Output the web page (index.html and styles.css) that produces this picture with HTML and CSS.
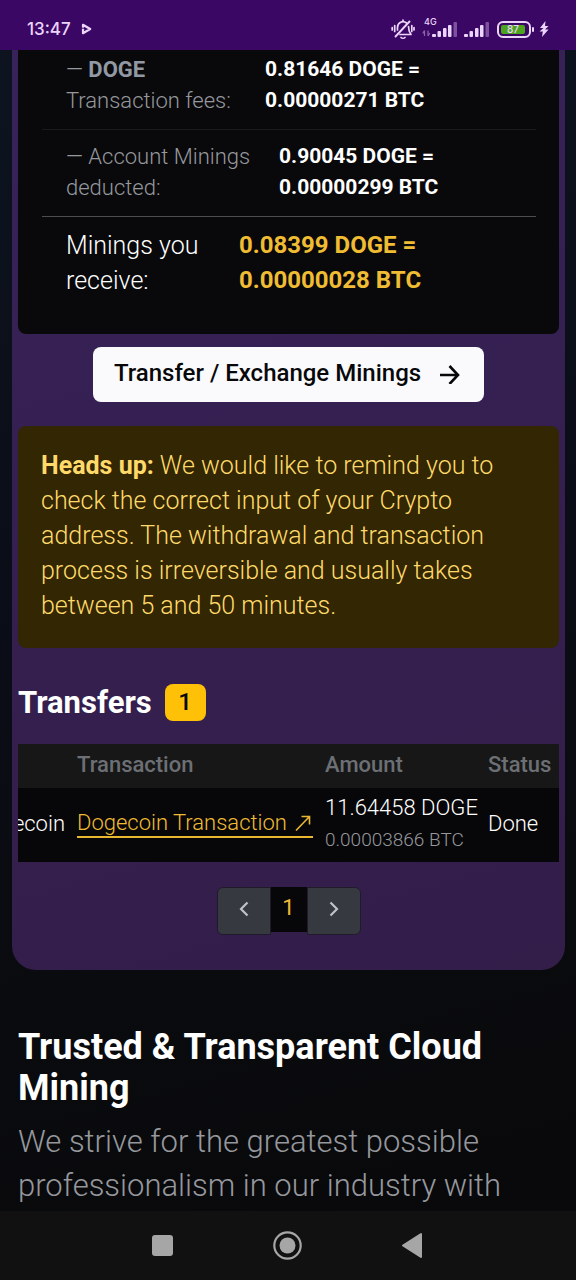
FILE: index.html
```html
<!DOCTYPE html>
<html lang="en">
<head>
<meta charset="utf-8">
<meta name="viewport" content="width=device-width, initial-scale=1">
<title>Cloud Mining</title>
<link rel="stylesheet" href="styles.css">
</head>
<body>
<header class="status-bar">
  <div class="status-left">
    <time class="clock">13:47</time>
    <svg class="play" viewBox="0 0 11 12" width="11" height="12" aria-hidden="true"><path d="M2 1.8L9.2 6 2 10.2z" fill="none" stroke="#ecd5fb" stroke-width="2.2" stroke-linejoin="round"/><path d="M0 5.2h4" stroke="#3b0764" stroke-width="1"/></svg>
  </div>
  <div class="status-right">
    <svg viewBox="0 0 24 22" width="24" height="22" aria-hidden="true" fill="none" stroke="#ecd5fb" stroke-width="1.7" stroke-linecap="round"><path d="M6.500 12V9.500a5.500 5.800 0 0 1 9-4.500M17.500 8.500c0 4 .5 5.500 2.500 8H9" stroke-linejoin="round"/><path d="M10 19.500c1 1 3 1 4 0M12 3V2M3.700 7.500v6M1.200 9.500v2.500M20.800 7.500v6M23 9.500v2.500"/><path d="M4.500 18.500L18.500 3.500" stroke-width="1.900"/></svg>
    <span class="network">
      <span class="network-type">4G</span>
      <svg viewBox="0 0 36 20" width="36" height="20" aria-hidden="true" fill="#ecd5fb"><path d="M2.500 11.500v5.500M.8 14.500l1.700-3M6 11.500v5.500M7.700 14l-1.700 3" stroke="#8d65aa" stroke-width="1.200" fill="none"/><rect x="10" y="15" width="4" height="3" rx="1"/><rect x="15.500" y="12" width="3.500" height="6" rx="1"/><rect x="21" y="9" width="3.500" height="9" rx="1"/><rect x="26" y="6" width="3.500" height="12" rx="1"/><rect x="31.500" y="3" width="3.500" height="15" rx="1" fill="#7d519f"/></svg>
    </span>
    <svg class="signal" viewBox="0 0 26 20" width="26" height="20" aria-hidden="true" fill="#ecd5fb"><rect x="0" y="15" width="4" height="3" rx="1"/><rect x="5.500" y="12" width="3.500" height="6" rx="1"/><rect x="11" y="9" width="3.500" height="9" rx="1"/><rect x="16" y="6" width="3.500" height="12" rx="1"/><rect x="21.500" y="3" width="3.500" height="15" rx="1" fill="#7d519f"/></svg>
    <span class="battery"><span class="battery-level">87</span></span>
    <svg class="bolt" viewBox="0 0 10 16" width="10" height="16" aria-hidden="true"><path d="M6.500 0L1 7h3.500L.5 10.500h3.300L3 16l6.500-7.500H6L9.500 5H6z" fill="#ecd5fb"/></svg>
  </div>
</header>

<main class="page">
  <section class="card">
    <div class="panel">
      <dl class="summary">
        <div class="line line-fees">
          <dt>— <b>DOGE</b><br>Transaction fees:</dt>
          <dd>0.81646 DOGE =<br>0.00000271 BTC</dd>
        </div>
        <div class="line line-deducted">
          <dt>— Account Minings<br>deducted:</dt>
          <dd>0.90045 DOGE =<br>0.00000299 BTC</dd>
        </div>
        <div class="line line-total">
          <dt>Minings you<br>receive:</dt>
          <dd>0.08399 DOGE =<br>0.00000028 BTC</dd>
        </div>
      </dl>
    </div>

    <button class="submit" type="button">Transfer / Exchange Minings
      <svg viewBox="0 0 20 20" width="20" height="20" aria-hidden="true"><path d="M0 11h17M9.500 2l8.500 9-8.500 9" fill="none" stroke="#08080a" stroke-width="2.600"/></svg>
    </button>

    <p class="notice"><b>Heads up:</b> We would like to remind you to<br>check the correct input of your Crypto<br>address. The withdrawal and transaction<br>process is irreversible and usually takes<br>between 5 and 50 minutes.</p>

    <h3 class="subtitle">Transfers <span class="badge">1</span></h3>

    <div class="table-wrap">
      <table class="transfers">
        <thead>
          <tr><th class="col-coin"></th><th class="col-tx">Transaction</th><th class="col-amount">Amount</th><th class="col-status">Status</th></tr>
        </thead>
        <tbody>
          <tr>
            <td class="col-coin">Dogecoin</td>
            <td><a class="tx-link" href="#">Dogecoin Transaction <svg viewBox="0 0 18 18" width="18" height="18" aria-hidden="true"><path d="M1 16.500L14 3M6.500 2.500h8v8" fill="none" stroke="#e9b730" stroke-width="1.600"/></svg></a></td>
            <td>11.64458 DOGE<br><small>0.00003866 BTC</small></td>
            <td>Done</td>
          </tr>
        </tbody>
      </table>
    </div>

    <nav class="pager" aria-label="Transfers pages">
      <button class="step step-prev" type="button" aria-label="Previous page"><svg viewBox="0 0 10 16" width="10" height="16" aria-hidden="true"><path d="M8.500 1.500L2 8l6.500 6.500" fill="none" stroke="#bfc3c8" stroke-width="2.200"/></svg></button>
      <button class="current" type="button" aria-current="page">1</button>
      <button class="step step-next" type="button" aria-label="Next page"><svg viewBox="0 0 10 16" width="10" height="16" aria-hidden="true"><path d="M1.500 1.500L8 8l-6.500 6.500" fill="none" stroke="#bfc3c8" stroke-width="2.200"/></svg></button>
    </nav>
  </section>

  <section class="about">
    <h2>Trusted &amp; Transparent Cloud<br>Mining</h2>
    <p>We strive for the greatest possible<br>professionalism in our industry with</p>
  </section>
</main>

<footer class="system-nav">
  <button type="button" aria-label="Recent apps"><svg viewBox="0 0 32 32" width="32" height="32" aria-hidden="true"><rect x="5" y="5" width="21" height="21" rx="3" fill="#a6a6a6"/></svg></button>
  <button type="button" aria-label="Home"><svg viewBox="0 0 32 32" width="32" height="32" aria-hidden="true"><circle cx="15.500" cy="15.500" r="13.200" fill="none" stroke="#a6a6a6" stroke-width="2.200"/><circle cx="15.500" cy="15.500" r="8" fill="#a6a6a6"/></svg></button>
  <button type="button" aria-label="Back"><svg viewBox="0 0 32 32" width="32" height="32" aria-hidden="true"><path d="M24 4v23L6 15.500z" fill="#a6a6a6" stroke="#a6a6a6" stroke-width="2" stroke-linejoin="round"/></svg></button>
</footer>
</body>
</html>
```
FILE: styles.css
```css
* {
  box-sizing: border-box;
}

body {
  margin: 0;
  height: 100vh;
  display: flex;
  flex-direction: column;
  background: linear-gradient(165deg, #0d1420 0, #0a0d17 45%, #0a0b0e 72%, #08080a 100%);
  color: #fff;
  font-family: Roboto, "Noto Sans", sans-serif;
  overflow: hidden;
}

h2, h3, p, dl, dd {
  margin: 0;
}

button {
  border: 0;
  padding: 0;
  font: inherit;
  cursor: pointer;
}

/* Status bar */
.status-bar {
  flex: none;
  height: 50px;
  padding: 8px 27px 0 27px;
  display: flex;
  align-items: center;
  justify-content: space-between;
  background: #3b0764;
  color: #ecd5fb;
}

.status-left,
.status-right {
  display: flex;
  align-items: center;
}

.status-left {
  gap: 10px;
}

.clock {
  font: 500 17px/20px Inter, sans-serif;
}

.network {
  display: flex;
  position: relative;
  margin-left: 7px;
}

.network-type {
  position: absolute;
  left: 2px;
  top: -2px;
  font: 500 9px/10px Inter, sans-serif;
}

.signal {
  margin-left: 6px;
}

.battery {
  position: relative;
  width: 34px;
  height: 17px;
  margin: 0 8px 0 7px;
  padding: 2px;
  border: 2px solid #ecd5fb;
  border-radius: 6px;
}

.battery::after {
  content: "";
  position: absolute;
  right: -5px;
  top: 4px;
  width: 2px;
  height: 5px;
  border-radius: 1px;
  background: #ecd5fb;
}

.battery-level {
  display: block;
  width: 24px;
  border-radius: 2px;
  background: #4ba31f;
  font: 500 10px/9px Inter, sans-serif;
  text-align: center;
}

/* Page */
.page {
  flex: 1;
  min-height: 0;
  overflow: hidden;
}

.card {
  margin: 0 11px 0 12px;
  padding: 0 6px 35px;
  border-radius: 0 0 24px 24px;
  background: linear-gradient(165deg, #38225a, #341f4f 55%, #331e4a);
  display: flex;
  flex-direction: column;
}

.panel {
  padding: 0 23px 36px 24px;
  border-radius: 0 0 8px 8px;
  background: #09090b;
}

.line {
  display: flex;
  padding: 11px 24px 13px;
  border-bottom: 1px solid #1b1b1e;
  font-size: 21px;
  line-height: 31px;
}

.line dt {
  flex: none;
  color: #96989d;
  font-size: 22px;
  font-weight: 300;
}

.line dt b {
  color: #9299a3;
  font-weight: 700;
}

.line dd {
  font-weight: 700;
}

.line-fees {
  padding-top: 4px;
}

.line-fees dt {
  width: 199px;
}

.line-deducted {
  border-color: #4d4d50;
}

.line-deducted dt {
  width: 213px;
}

.line-total {
  padding-bottom: 0;
  border: 0;
  font-size: 24px;
  line-height: 35px;
}

.line-total dt {
  width: 173px;
  color: #fff;
  font-size: 25px;
}

.line-total dd {
  color: #f0bc33;
}

.submit {
  align-self: center;
  display: flex;
  align-items: center;
  gap: 19px;
  margin: 13px 0 24px;
  padding: 9px 24px 11px 21px;
  border-radius: 8px;
  background: #fafafc;
  color: #08080a;
  font-size: 24px;
  font-weight: 500;
  line-height: 35px;
}

.notice {
  padding: 22px 20px 25px 23px;
  border-radius: 8px;
  background: #332602;
  color: #ffda6a;
  font-size: 25px;
  font-weight: 300;
  line-height: 35px;
}

.notice b {
  font-weight: 700;
}

.subtitle {
  display: flex;
  align-items: center;
  gap: 13px;
  margin: 36px 0 23px;
  font-size: 31px;
  font-weight: 700;
  line-height: 37px;
}

.badge {
  width: 41px;
  border-radius: 8px;
  background: #ffc107;
  color: #08080a;
  font-size: 24px;
  font-weight: 500;
  text-align: center;
}

.table-wrap {
  display: flex;
  justify-content: flex-end;
  overflow: hidden;
}

.transfers {
  flex: none;
  width: 600px;
  border-collapse: collapse;
  table-layout: fixed;
  background: #070709;
  font-size: 22px;
  font-weight: 300;
  line-height: 31px;
  text-align: left;
  white-space: nowrap;
}

.transfers th {
  padding: 5px 6px 8px;
  background: #171717;
  color: #6c7075;
  font-weight: 500;
}

.transfers td {
  padding: 4px 6px 7px;
}

.transfers .col-coin {
  text-align: right;
}

.transfers .col-tx {
  width: 248px;
}

.transfers .col-amount {
  width: 163px;
}

.transfers .col-status {
  width: 77px;
}

.transfers small {
  color: #96989d;
  font-size: 19px;
}

.tx-link {
  display: flex;
  align-items: center;
  justify-content: space-between;
  border-bottom: 2px solid #e9b730;
  color: #f0bc33;
  line-height: 26px;
  text-decoration: none;
}

.pager {
  align-self: center;
  display: flex;
  align-items: flex-start;
  margin-top: 25px;
}

.step {
  width: 54px;
  height: 48px;
  padding-bottom: 4px;
  border: 1px solid #211a2b;
  background: #363a40;
  display: flex;
  align-items: center;
  justify-content: center;
}

.step-prev {
  border-radius: 6px 0 0 6px;
}

.step-next {
  border-radius: 0 6px 6px 0;
}

.current {
  width: 36px;
  height: 45px;
  padding-bottom: 4px;
  background: #070709;
  color: #f0bc33;
  font-size: 22px;
  font-weight: 400;
}

.about {
  padding: 57px 18px 0;
}

.about h2 {
  font-size: 36px;
  font-weight: 700;
  line-height: 41px;
}

.about p {
  margin-top: 11px;
  color: #96989d;
  font-size: 31px;
  font-weight: 300;
  line-height: 44px;
}

/* System navigation */
.system-nav {
  flex: none;
  height: 69px;
  display: flex;
  align-items: center;
  justify-content: center;
  gap: 93px;
  background: #111;
}

.system-nav button {
  display: flex;
  background: none;
}
```
